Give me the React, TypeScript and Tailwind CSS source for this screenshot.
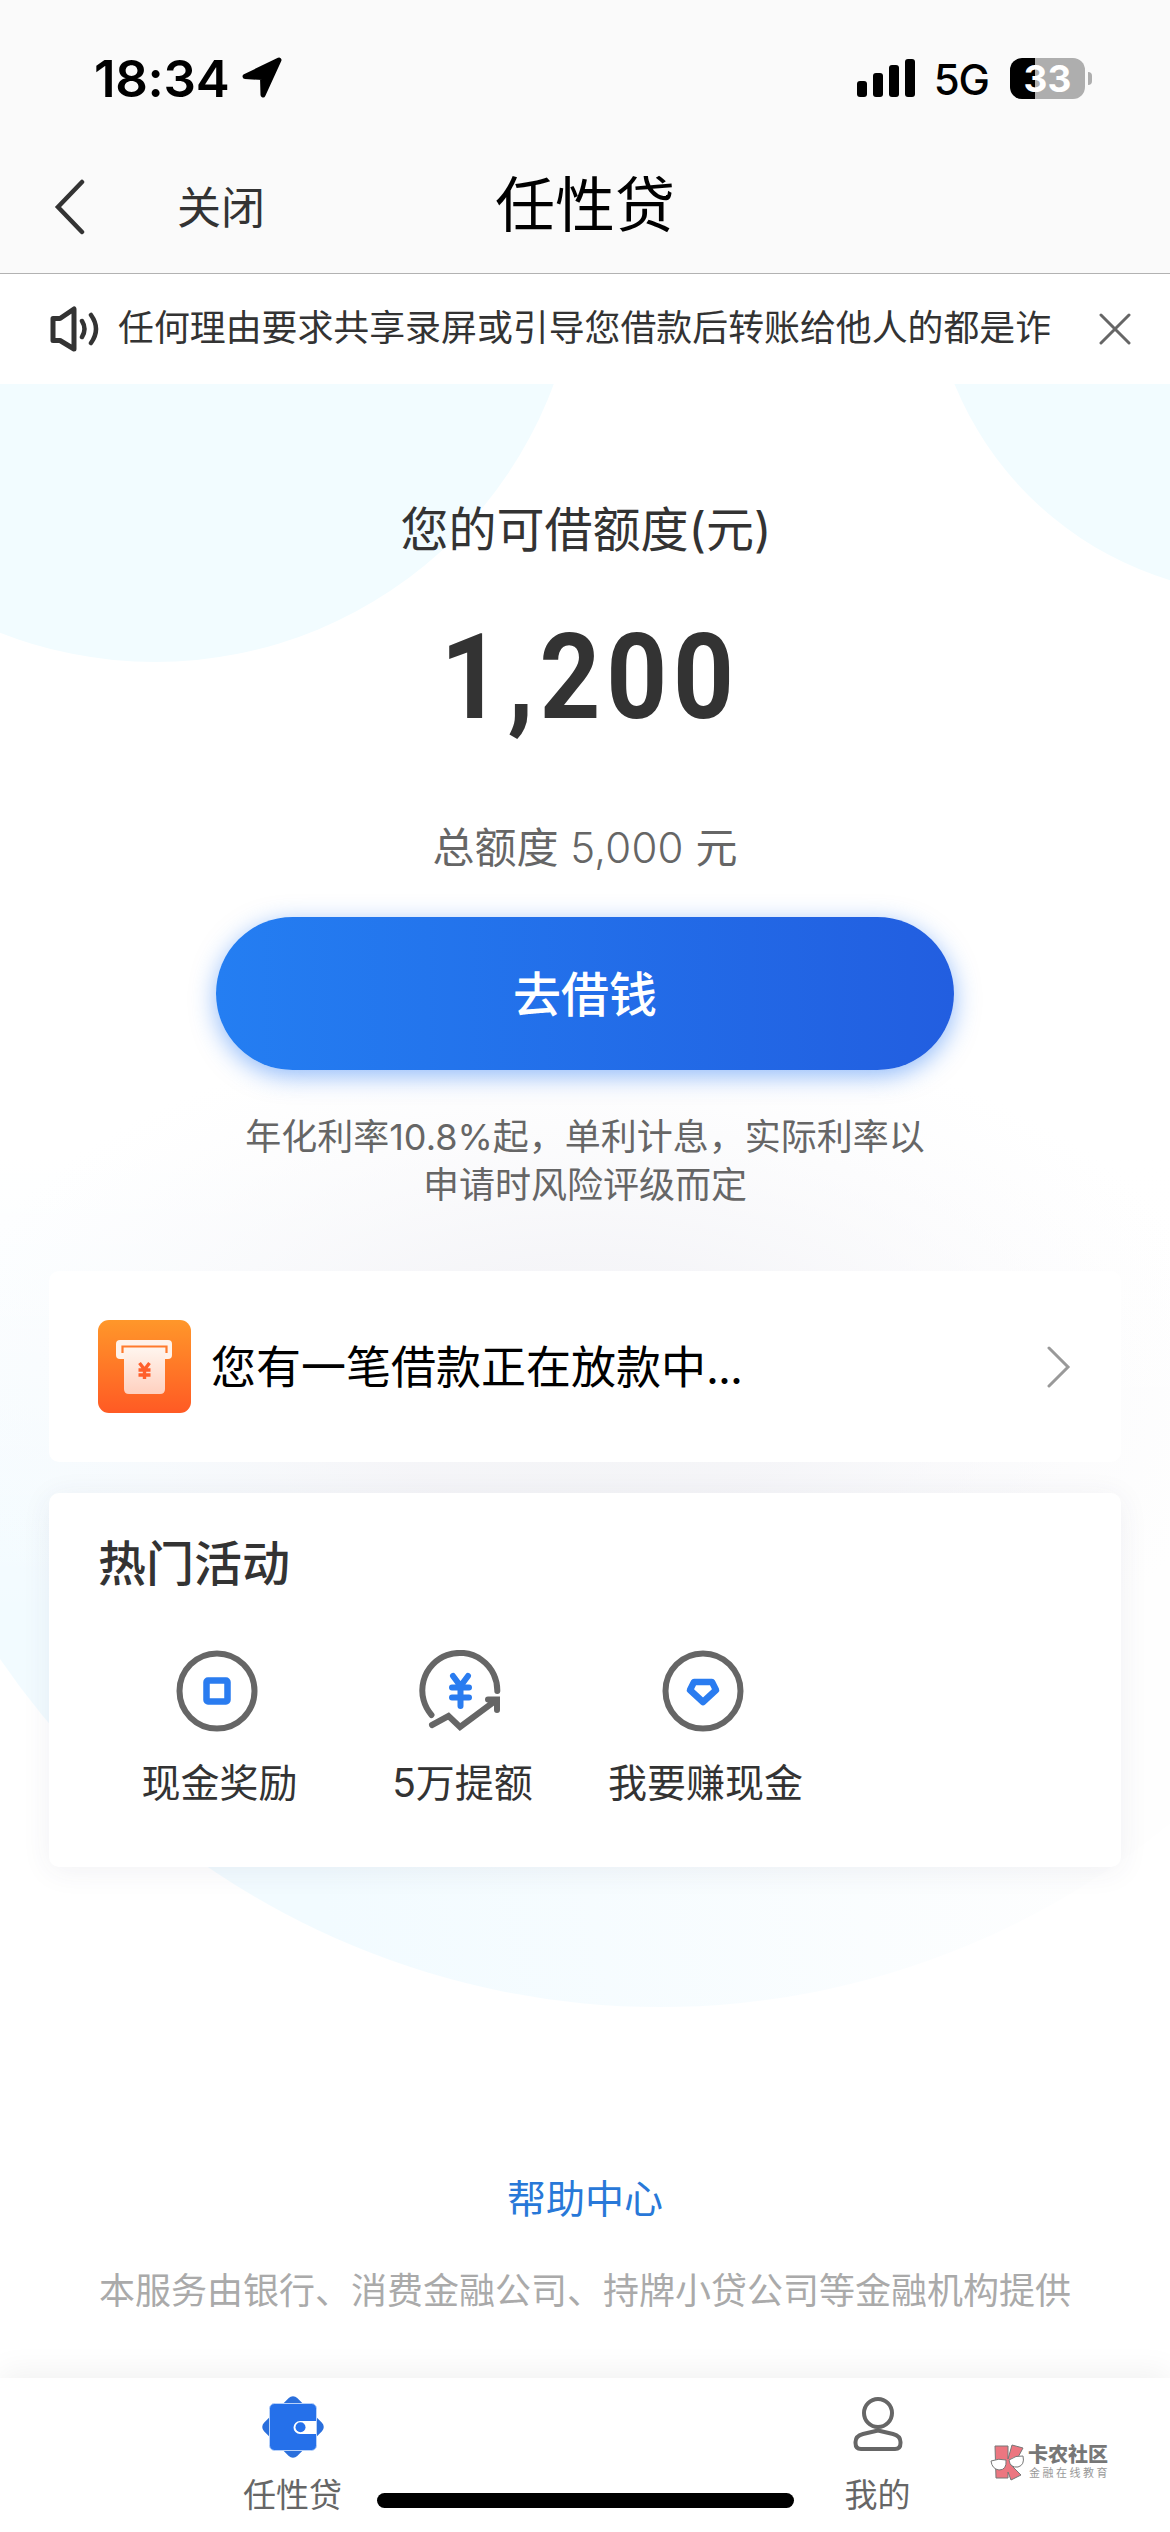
import React from "react";

type Activity = {
  label: string;
  icon: React.ReactNode;
};

const LocationArrow = () => (
  <svg width="42" height="42" viewBox="0 0 42 42" className="ml-[12px]">
    <path
      d="M4 19.500 L38 3 L22 38 L21.500 20.500 Z"
      fill="#000"
      stroke="#000"
      strokeWidth="5"
      strokeLinejoin="round"
    />
  </svg>
);

const CashIcon = () => (
  <svg width="82" height="82" viewBox="0 0 82 82" fill="none">
    <circle cx="41" cy="41" r="37.5" stroke="#666" strokeWidth="6" />
    <rect x="30.5" y="30.5" width="21" height="21" rx="1.5" stroke="#2a7cf0" strokeWidth="6.5" />
  </svg>
);

const RaiseIcon = () => (
  <svg width="82" height="82" viewBox="0 0 82 82" fill="none" strokeLinecap="round">
    <path d="M12.5 65 A37.5 37.5 0 1 1 78.3 41" stroke="#666" strokeWidth="6" />
    <path d="M13 75 L29.5 66 L41 77 L76 51 M69 49.5 H78 V60" stroke="#666" strokeWidth="6" />
    <path
      d="M34 26 L41.5 36 L49 26 M41.5 36 V56 M33 37.5 H50 M33 47.5 H50"
      stroke="#2a7cf0"
      strokeWidth="6"
    />
  </svg>
);

const GemIcon = () => (
  <svg width="82" height="82" viewBox="0 0 82 82" fill="none">
    <circle cx="41" cy="41" r="37.5" stroke="#666" strokeWidth="6" />
    <path
      d="M32 32 H50 L54 40 L41 52 L28 40 Z"
      stroke="#2a7cf0"
      strokeWidth="6.5"
      strokeLinejoin="round"
    />
  </svg>
);

const activities: Activity[] = [
  { label: "现金奖励", icon: <CashIcon /> },
  { label: "5万提额", icon: <RaiseIcon /> },
  { label: "我要赚现金", icon: <GemIcon /> },
];

const StatusBar = () => (
  <div className="flex h-[156px] items-center justify-between pl-[94px] pr-[78px]">
    <div className="flex items-center">
      <span className="text-[51px] font-semibold leading-none tracking-[-0.3px] text-black">
        18:34
      </span>
      <LocationArrow />
    </div>
    <div className="flex items-center">
      <div className="flex items-end gap-[6px]">
        <div className="h-[16px] w-[10px] rounded-[3px] bg-black" />
        <div className="h-[24px] w-[10px] rounded-[3px] bg-black" />
        <div className="h-[32px] w-[10px] rounded-[3px] bg-black" />
        <div className="h-[38px] w-[10px] rounded-[3px] bg-black" />
      </div>
      <span className="ml-[19px] mt-[3px] text-[42px] font-medium leading-none tracking-[-1px] text-black">
        5G
      </span>
      <div className="ml-[21px] flex h-[41px] w-[75px] items-center justify-center rounded-[12px] bg-[linear-gradient(90deg,#000_33%,#aeaeae_33%)]">
        <span className="text-[37px] font-bold leading-none text-white">33</span>
      </div>
      <div className="ml-[3px] h-[13px] w-[4px] rounded-r-full bg-[#aeaeae]" />
    </div>
  </div>
);

const NavBar = () => (
  <div className="grid h-[118px] grid-cols-3 items-center border-b border-[#b2b2b2] pb-[17px]">
    <div className="flex items-center pl-[53px]">
      <svg width="32" height="56" viewBox="0 0 32 56" fill="none" className="mt-[1px]">
        <path d="M29 3 L5 28 L29 53" stroke="#333" strokeWidth="4.5" strokeLinecap="round" />
      </svg>
      <span className="ml-[92px] mt-[3px] text-[44px] leading-none text-[#333]">关闭</span>
    </div>
    <h1 className="-mt-[3px] text-center text-[60px] leading-none text-black">任性贷</h1>
  </div>
);

const Notice = () => (
  <div className="relative flex h-[110px] items-center bg-white pl-[48px]">
    <svg width="54" height="50" viewBox="0 0 54 50" fill="none" stroke="#333">
      <path d="M5 14.5 H12 L26 5 V45 L12 36.5 H5 Z" strokeWidth="5" strokeLinejoin="round" />
      <path d="M34 17 Q39 25 34 33 M43 11 Q53 25 43 39" strokeWidth="4.5" strokeLinecap="round" />
    </svg>
    <span className="ml-[16px] w-[936px] whitespace-nowrap text-[35.9px] leading-none text-[#333]">
      任何理由要求共享录屏或引导您借款后转账给他人的都是诈
    </span>
    <svg width="32" height="32" viewBox="0 0 32 32" className="ml-[45px]">
      <path d="M2 2 L30 30 M30 2 L2 30" stroke="#666" strokeWidth="3" strokeLinecap="round" />
    </svg>
  </div>
);

const Backdrop = () => (
  <svg className="absolute inset-0" width="1170" height="1994" viewBox="0 384 1170 1994">
    <defs>
      <linearGradient id="fadeTop" x1="0" y1="0" x2="0" y2="1">
        <stop offset="0" stopColor="#fff" />
        <stop offset="0.25" stopColor="#fff" />
        <stop offset="1" stopColor="#fff" stopOpacity="0" />
      </linearGradient>
      <linearGradient id="lowCircle" gradientUnits="userSpaceOnUse" x1="300" y1="1800" x2="1080" y2="1640">
        <stop offset="0" stopColor="#f2fbff" />
        <stop offset="1" stopColor="#fefefe" />
      </linearGradient>
      <radialGradient id="haze">
        <stop offset="0" stopColor="#f3f4f6" />
        <stop offset="0.35" stopColor="#f5f5f8" stopOpacity="0.95" />
        <stop offset="1" stopColor="#fafafc" stopOpacity="0" />
      </radialGradient>
    </defs>
    <circle cx="155" cy="237" r="425" fill="#f2fcff" />
    <circle cx="1269" cy="255" r="340" fill="#f2fcff" />
    <circle cx="660" cy="1207" r="800" fill="url(#lowCircle)" clipPath="inset(600px 0 0 0)" />
    <rect x="0" y="1000" width="1170" height="620" fill="url(#fadeTop)" />
    <ellipse cx="585" cy="1390" rx="660" ry="370" fill="url(#haze)" />
  </svg>
);

const Quota = () => (
  <section className="flex flex-col items-center pt-[122px]">
    <p className="ml-[2px] text-[48px] leading-[48px] text-[#333]">您的可借额度(元)</p>
    <p className="ml-[11px] mt-[60px] h-[126px] scale-x-90 font-[Roboto] text-[118px] font-bold leading-[128px] tracking-[6.500px] text-[#333]">
      1,200
    </p>
    <p className="mt-[87px] h-[41px] whitespace-pre text-[42px] leading-[42px] text-[#666]">
      总额度 <span className="font-light tracking-[0.2px]">5,000</span> 元
    </p>
    <button className="mt-[49px] h-[153px] w-[738px] rounded-full bg-linear-to-r from-[#247ef2] to-[#225ee0] pt-[2px] text-[48px] font-medium text-white shadow-[0_6px_24px_rgba(36,120,245,0.5)]">
      去借钱
    </button>
    <p className="mt-[43px] h-[95px] text-center text-[36px] leading-[48px] text-[#666]">
      年化利率10.8%起，单利计息，实际利率以
      <br />
      申请时风险评级而定
    </p>
  </section>
);

const LoanCard = () => (
  <div className="mx-[49px] mt-[63px] flex h-[191px] items-center rounded-[10px] bg-white pl-[49px] pr-[50px]">
    <svg width="93" height="93" viewBox="0 0 93 93">
      <defs>
        <linearGradient id="orange" x1="0" y1="0" x2="0" y2="1">
          <stop offset="0" stopColor="#ff972a" />
          <stop offset="1" stopColor="#ff5a24" />
        </linearGradient>
        <linearGradient id="paper" x1="0" y1="0" x2="0" y2="1">
          <stop offset="0" stopColor="#fff5ee" />
          <stop offset="1" stopColor="#ffd0bf" />
        </linearGradient>
      </defs>
      <rect width="93" height="93" rx="11" fill="url(#orange)" />
      <rect x="18" y="20" width="56" height="19" rx="4" fill="#fff2ea" />
      <path d="M24.5 33 V26.5 H68.5 V33" fill="none" stroke="#ff7a2c" strokeWidth="2.2" />
      <path d="M26 28 H67 V69 Q67 74 62 74 H31 Q26 74 26 69 Z" fill="url(#paper)" />
      <path
        d="M41.5 43 L46.5 49.5 L51.5 43 M46.5 49.5 V59 M40.5 50 H52.5 M40.5 55 H52.5"
        fill="none"
        stroke="#ff5f2b"
        strokeWidth="3.4"
      />
    </svg>
    <span className="ml-[20px] mt-[2px] flex-1 text-[45px] leading-none text-black">
      您有一笔借款正在放款中<span className="tracking-[-1px]">...</span>
    </span>
    <svg width="24" height="42" viewBox="0 0 24 42" fill="none">
      <path d="M2 2 L21 21 L2 40" stroke="#999" strokeWidth="3" strokeLinecap="round" />
    </svg>
  </div>
);

const Activities = () => (
  <div className="mx-[49px] mt-[31px] h-[374px] rounded-[10px] bg-white pt-[47px] shadow-[0_4px_30px_rgba(50,50,100,0.07)]">
    <h2 className="pl-[49px] text-[48px] font-medium leading-[48px] text-[#333]">热门活动</h2>
    <div className="mt-[62px] flex pl-[49px]">
      {activities.map((item) => (
        <div key={item.label} className="flex w-[243px] flex-col items-center">
          <div className="-ml-[5px]">{item.icon}</div>
          <span className="mt-[31px] whitespace-nowrap text-[39px] leading-[40px] text-[#333]">
            {item.label}
          </span>
        </div>
      ))}
    </div>
  </div>
);

const Watermark = () => (
  <div className="absolute left-[990px] top-[66px] flex">
    <svg width="36" height="38" viewBox="0 0 36 38">
      <path
        d="M5 2 H18 V15 L22 1 L33 4 L26 17 L20 20 L31 31 L21 36 L18 28 V34 H6 Z"
        fill="#ec7680"
        stroke="#777"
        strokeWidth="1"
      />
      <path
        d="M1 17 Q9 14 16 16 Q17 26 9 26 Q2 25 1 17 Z M19 16 Q26 11 33 12 Q35 21 28 23 Q20 24 19 16 Z"
        fill="#fff"
        stroke="#777"
        strokeWidth="1"
      />
    </svg>
    <div className="ml-[2px] flex flex-col pt-[1px]">
      <span className="text-[20px] font-black leading-[20px] text-[#777]">卡农社区</span>
      <span className="mt-[2px] whitespace-nowrap pl-[1px] text-[11px] leading-[12px] tracking-[2.5px] text-[#999]">
        金融在线教育
      </span>
    </div>
  </div>
);

const TabBar = () => (
  <nav className="relative grid h-[154px] grid-cols-2 bg-white pt-[18px] shadow-[0_-6px_30px_rgba(0,0,0,0.06)]">
    <div className="flex flex-col items-center">
      <svg width="62" height="62" viewBox="0 0 62 62">
        <rect x="7.5" y="7.5" width="47" height="47" rx="6" fill="#2a6fdc" transform="rotate(45 31 31)" />
        <rect x="7.5" y="7.5" width="47" height="47" rx="5" fill="#2570ea" stroke="#b8d2fa" strokeWidth="1" />
        <path d="M54 25 H38 A6.5 6.5 0 0 0 38 38 H54 Z" fill="#fff" />
        <circle cx="38.5" cy="31.2" r="5" fill="#2570ea" />
      </svg>
      <span className="mt-[21px] text-[33px] leading-[33px] text-[#666]">任性贷</span>
    </div>
    <div className="flex flex-col items-center">
      <svg width="62" height="62" viewBox="0 0 62 62" fill="none" stroke="#666" strokeWidth="4">
        <circle cx="31" cy="17" r="14" />
        <path
          d="M31 34.5 L46 38 Q53.5 40 53.5 46 V47 Q53.5 53 48 53 H14 Q8.5 53 8.5 47 V46 Q8.5 40 16 38 Z"
          strokeLinejoin="round"
        />
      </svg>
      <span className="mt-[21px] text-[33px] leading-[33px] text-[#666]">我的</span>
    </div>
    <Watermark />
    <div className="absolute left-[377px] top-[115px] h-[15px] w-[417px] rounded-full bg-black" />
  </nav>
);

const App = () => {
  return (
    <div className="flex h-[2532px] w-[1170px] flex-col overflow-hidden bg-white font-[Inter,'Noto_Sans_CJK_SC',sans-serif]">
      <header className="bg-[#fafafa]">
        <StatusBar />
        <NavBar />
      </header>
      <Notice />
      <main className="relative h-[1994px]">
        <Backdrop />
        <div className="relative">
          <Quota />
          <LoanCard />
          <Activities />
          <div className="flex flex-col items-center pt-[312px]">
            <a className="text-[39px] leading-[40px] text-[#2878d8]">帮助中心</a>
            <p className="mt-[54px] whitespace-nowrap text-[36px] leading-[36px] text-[#aaa]">
              本服务由银行、消费金融公司、持牌小贷公司等金融机构提供
            </p>
          </div>
        </div>
      </main>
      <TabBar />
    </div>
  );
};

export default App;
